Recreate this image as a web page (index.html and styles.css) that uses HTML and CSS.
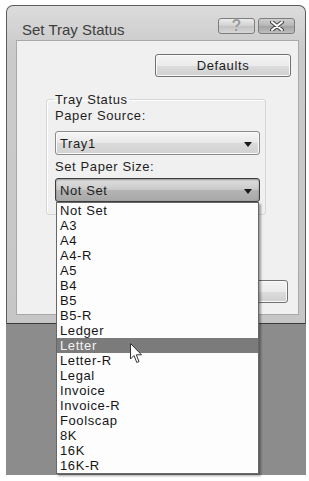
FILE: index.html
```html
<!DOCTYPE html>
<html lang="en">
<head>
  <meta charset="UTF-8">
  <title>Set Tray Status</title>
  <link rel="stylesheet" href="styles.css">
</head>
<body>
  <div class="screen">
    <div class="window">
      <div class="titlebar">
        <span class="title">Set Tray Status</span>
        <div class="caption-buttons">
          <span class="cap-btn help">?</span>
          <span class="cap-btn close">
            <svg width="14" height="10" viewBox="0 0 14 10">
              <path d="M2 1 L12 9 M12 1 L2 9" stroke="#444" stroke-width="4" stroke-linecap="round"/>
              <path d="M2 1 L12 9 M12 1 L2 9" stroke="#fff" stroke-width="2" stroke-linecap="round"/>
            </svg>
          </span>
        </div>
      </div>

      <div class="client">
        <div class="top-row">
          <button class="btn defaults">Defaults</button>
        </div>

        <fieldset class="group">
          <legend>Tray Status</legend>
          <div class="field-label">Paper Source:</div>
          <div class="combo">
            <span>Tray1</span>
            <span class="arrow"></span>
          </div>
          <div class="field-label">Set Paper Size:</div>
          <div class="combo active">
            <span>Not Set</span>
            <span class="arrow"></span>
          </div>
        </fieldset>

        <div class="bottom-row">
          <button class="btn small">Cancel</button>
          <button class="btn small">OK</button>
        </div>
      </div>
    </div>
    <div class="backdrop"></div>

    <ul class="dropdown">
      <li>Not Set</li>
      <li>A3</li>
      <li>A4</li>
      <li>A4-R</li>
      <li>A5</li>
      <li>B4</li>
      <li>B5</li>
      <li>B5-R</li>
      <li>Ledger</li>
      <li class="selected">Letter</li>
      <li>Letter-R</li>
      <li>Legal</li>
      <li>Invoice</li>
      <li>Invoice-R</li>
      <li>Foolscap</li>
      <li>8K</li>
      <li>16K</li>
      <li>16K-R</li>
    </ul>

    <svg class="cursor" width="13" height="21" viewBox="0 0 13 21">
      <path d="M0.5 0.5 L0.5 16 L4 12.5 L6.8 19.5 L9 18.6 L6.3 11.8 L11.5 11.8 Z" fill="#fff" stroke="#333" stroke-width="1"/>
    </svg>
  </div>
</body>
</html>
```

FILE: styles.css
```css
body {
  margin: 0;
  background: #fff;
  font-family: "Liberation Sans", Arial, sans-serif;
  font-size: 13px;
  color: #1e1e1e;
}

.screen {
  position: relative;
  width: 309px;
  height: 481px;
  padding: 5px 0 0 6px;
  box-sizing: border-box;
}

.window {
  width: 300px;
  box-sizing: border-box;
  border: 1px solid #5c5c5c;
  border-bottom-color: #3a3a3a;
  border-radius: 7px 7px 0 0;
  background: linear-gradient(#dcdcdc, #cbcbcb 40px, #c6c6c6);
  padding: 0 6px 8px 9px;
}

.titlebar {
  height: 34px;
  display: flex;
  align-items: flex-start;
  justify-content: space-between;
}

.title {
  margin-top: 14px;
  margin-left: 6px;
  font-size: 15px;
  line-height: 19px;
  color: #3e3e3e;
}

.caption-buttons {
  display: flex;
  gap: 3px;
  margin-top: 12px;
  margin-right: 4px;
}

.cap-btn {
  width: 37px;
  height: 16px;
  box-sizing: border-box;
  border: 1px solid #7d7d7d;
  border-radius: 3px;
  display: flex;
  align-items: center;
  justify-content: center;
}

.help {
  background: linear-gradient(#ececec, #d0d0d0 50%, #c2c2c2 51%, #d6d6d6);
  font-size: 16px;
  font-weight: bold;
  color: #9a9a9a;
  text-shadow: 0 0 1px #fff;
  line-height: 14px;
}

.close {
  background: linear-gradient(#cfcfcf, #b4b4b4 50%, #a2a2a2 51%, #bdbdbd);
}

.client {
  height: 275px;
  box-sizing: border-box;
  background: #f0f0f0;
  border: 1px solid #a9a9a9;
  display: flex;
  flex-direction: column;
}

.top-row {
  display: flex;
  justify-content: flex-end;
  padding: 13px 7px 0 0;
}

.btn {
  font-family: "Liberation Sans", Arial, sans-serif;
  font-size: 13px;
  letter-spacing: 0.6px;
  color: #1e1e1e;
  border: 1px solid #707070;
  border-radius: 3px;
  background: linear-gradient(#f3f3f3, #ebebeb 50%, #dddddd 51%, #cfcfcf);
  box-shadow: inset 0 0 0 1px #fbfbfb;
  padding: 0;
}

.defaults {
  width: 136px;
  height: 23px;
}

.group {
  margin: 15px 0 0 29px;
  width: 220px;
  box-sizing: border-box;
  border: 1px solid #d6d6d6;
  border-radius: 3px;
  padding: 0 5px 12px 8px;
  box-shadow: inset 1px 1px 0 #fff;
}

.group legend {
  padding: 0 1px;
  margin-left: -1px;
  line-height: 15px;
  letter-spacing: 0.6px;
}

.field-label {
  line-height: 15px;
  letter-spacing: 0.6px;
  margin-top: 1px;
}

.field-label + .combo {
  margin-top: 8px;
}

.combo + .field-label {
  margin-top: 4px;
}

.combo ~ .field-label + .combo {
  margin-top: 4px;
}

.combo {
  height: 24px;
  box-sizing: border-box;
  border: 1px solid #8a8a8a;
  border-radius: 3px;
  background: linear-gradient(#f6f6f6, #e8e8e8 50%, #dadada 51%, #d2d2d2);
  box-shadow: inset 0 0 0 1px #fafafa;
  display: flex;
  align-items: center;
  justify-content: space-between;
  padding: 0 7px 0 4px;
  letter-spacing: 0.6px;
}

.combo.active {
  border-color: #3c3c3c;
  background: linear-gradient(#e2e2e2, #c8c8c8 50%, #b4b4b4 51%, #a8a8a8);
  box-shadow: inset 0 1px 2px rgba(0, 0, 0, 0.35);
}

.arrow {
  width: 0;
  height: 0;
  border-left: 4px solid transparent;
  border-right: 4px solid transparent;
  border-top: 5px solid #1a1a1a;
  margin-top: 2px;
}

.bottom-row {
  margin-top: auto;
  display: flex;
  justify-content: flex-end;
  gap: 6px;
  padding: 0 10px 11px 0;
}

.small {
  width: 80px;
  height: 23px;
}

.backdrop {
  width: 300px;
  height: 151px;
  background: #8c8c8c;
}

.dropdown {
  position: absolute;
  left: 56px;
  top: 202px;
  width: 203px;
  margin: 0;
  padding: 0;
  list-style: none;
  box-sizing: border-box;
  border: 1px solid #686868;
  background: #fdfdfd;
  box-shadow: 2px 2px 2px rgba(0, 0, 0, 0.35);
}

.dropdown li {
  height: 15px;
  line-height: 15px;
  padding-left: 3px;
  letter-spacing: 0.6px;
  color: #151515;
}

.dropdown li.selected {
  background: #7b7b7b;
  color: #f2f2f2;
}

.cursor {
  position: absolute;
  left: 130px;
  top: 343px;
}
```
